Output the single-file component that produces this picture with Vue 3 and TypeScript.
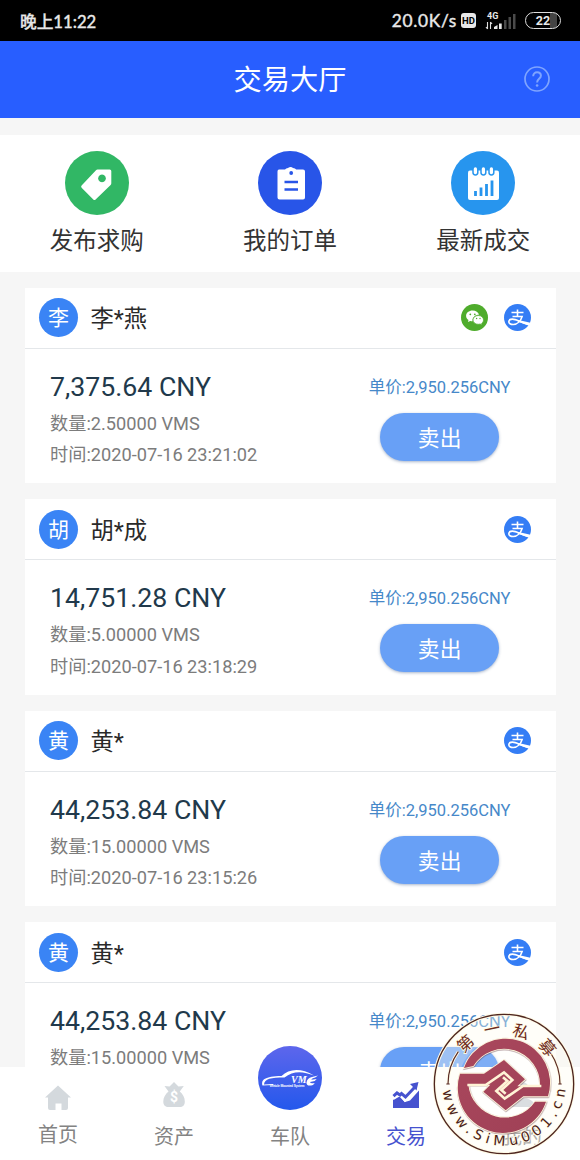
<script setup lang="ts">
import { ref } from 'vue'

interface Order {
  id: number
  name: string
  amount: string
  count: string
  time: string
  price: string
  wechat?: boolean
}

interface Tab {
  key: string
  label: string
}

const orders = ref<Order[]>([
  { id: 1, name: '李*燕', amount: '7,375.64', count: '2.50000', time: '2020-07-16 23:21:02', price: '2,950.256', wechat: true },
  { id: 2, name: '胡*成', amount: '14,751.28', count: '5.00000', time: '2020-07-16 23:18:29', price: '2,950.256' },
  { id: 3, name: '黄*', amount: '44,253.84', count: '15.00000', time: '2020-07-16 23:15:26', price: '2,950.256' },
  { id: 4, name: '黄*', amount: '44,253.84', count: '15.00000', time: '', price: '2,950.256' }
])

const actions = [
  { key: 'buy', label: '发布求购' },
  { key: 'order', label: '我的订单' },
  { key: 'deal', label: '最新成交' }
]

const tabs: Tab[] = [
  { key: 'home', label: '首页' },
  { key: 'asset', label: '资产' },
  { key: 'team', label: '车队' },
  { key: 'trade', label: '交易' },
  { key: 'mine', label: '我的' }
]

const activeTab = ref('trade')
</script>

<template>
  <div class="page">
    <!-- 状态栏 -->
    <div class="status-bar">
      <span class="status-time">晚上11:22</span>
      <div class="status-right">
        <span class="status-speed">20.0K/s</span>
        <span class="status-hd">HD</span>
        <svg class="status-signal" viewBox="0 0 32 20">
          <text x="2" y="7.5" class="signal-text">4G</text>
          <path d="M2.5 11v7M5.5 18v-7M1 16l1.5 2M7 13l-1.5-2" fill="none" stroke="#ddd" stroke-width="1.1" />
          <path d="M9 18v-2l3.5-2v4zM14 12.5h2.7V18H14z" fill="#e8e8e8" />
          <path d="M19 9h2.5v9H19zM23.5 6H26v12h-2.5zM28 3h2.5v15H28z" fill="#4a4a4a" />
        </svg>
        <div class="battery">22</div>
      </div>
    </div>

    <div class="nav-bar">
      <span class="nav-title">交易大厅</span>
      <svg class="nav-help" viewBox="0 0 26 26" fill="none" stroke="#7fa4ff" stroke-width="1.7">
        <circle cx="13" cy="13" r="12" />
        <path d="M9.2 10.2c0-2.4 1.6-3.9 3.9-3.9s3.8 1.4 3.8 3.5c0 3-3.8 3.2-3.8 6.600" stroke-width="2" />
        <circle cx="13.1" cy="19.5" r="1.3" fill="#7fa4ff" stroke="none" />
      </svg>
    </div>

    <!-- 快捷入口 -->
    <div class="actions">
      <div v-for="item in actions" :key="item.key" class="action-item">
        <div :class="['action-icon', item.key]">
          <svg v-if="item.key === 'buy'" viewBox="0 0 64 64">
            <path
              fill="#fff"
              fill-rule="evenodd"
              d="M32.5 18.5h12.2q1.6 0 1.6 1.6v12.2q0 1-.7 1.7L30.6 48.5q-1.2 1-2.3 0L16.6 36.800q-1-1.200 0-2.300L31 19.200q.6-.7 1.500-.7zM37 23.500a3.900 3.900 0 1 0 .01 0z"
            />
          </svg>
          <svg v-else-if="item.key === 'order'" viewBox="0 0 64 64">
            <path d="M21 18.500h6q1-1.600 3-1.600 2.800-2 5 0 2.300 0 3.200 1.600H45q2 0 2 2v26q0 2-2 2H21.500q-2 0-2-2v-26q0-2 1.500-2z" fill="#fff" />
            <circle cx="33.2" cy="22" r="1.9" fill="#2855e8" />
            <path d="M26.500 31h13.500M26.500 38.500h13.500" stroke="#2855e8" stroke-width="2.4" />
          </svg>
          <svg v-else viewBox="0 0 64 64">
            <rect x="17" y="19.5" width="31" height="29.5" rx="2" fill="#fff" />
            <g fill="#fff" stroke="#2795ee" stroke-width="1.5">
              <rect x="22" y="15.5" width="4.8" height="8.5" rx="2.4" />
              <rect x="30" y="15.5" width="4.8" height="8.5" rx="2.4" />
              <rect x="38" y="15.5" width="4.8" height="8.5" rx="2.4" />
            </g>
            <path d="M24.500 45v-5M30 45v-8.500M35.500 45V33M41 45V29.500" stroke="#2795ee" stroke-width="2.8" />
          </svg>
        </div>
        <span class="action-label">{{ item.label }}</span>
      </div>
    </div>

    <!-- 订单列表 -->
    <div class="order-list">
      <div v-for="order in orders" :key="order.id" class="order-card">
        <div class="card-header">
          <span class="avatar">{{ order.name[0] }}</span>
          <span class="user-name">{{ order.name }}</span>
          <div class="pay-types">
            <svg v-if="order.wechat" class="pay-icon" viewBox="0 0 27 27">
              <circle cx="13.5" cy="13.5" r="13.5" fill="#4fac2c" />
              <path d="M11.600 6.500c-3.700 0-6.500 2.400-6.500 5.400 0 1.700.9 3.200 2.400 4.200l-.6 2 2.300-1.200c.8.200 1.600.3 2.400.3z M11.600 6.500c3.200 0 5.800 1.800 6.400 4.300-3.700 0-6.700 2.500-6.400 6.400z" fill="#fff" />
              <path d="M17.300 11.500c3 0 5.200 2 5.200 4.400 0 1.400-.7 2.600-1.800 3.400l.4 1.700-1.900-1c-.6.200-1.200.3-1.900.3-3 0-5.300-2-5.300-4.400s2.300-4.400 5.300-4.400z" fill="#fff" stroke="#4fac2c" stroke-width=".7" />
              <g fill="#4fac2c">
                <circle cx="9.3" cy="10.3" r=".9" />
                <circle cx="13.8" cy="10.3" r=".9" />
                <circle cx="15.6" cy="14.5" r=".7" />
                <circle cx="19" cy="14.5" r=".7" />
              </g>
            </svg>
            <svg class="pay-icon" viewBox="0 0 27 27">
              <circle cx="13.5" cy="13.5" r="13.5" fill="#347df5" />
              <path d="M7.500 8.500h12M13.500 5.500v6.500M8.500 12.500h9.600c-1.200 4-4.500 8-8.900 8-2.700 0-4.400-1.100-4.400-2.800 0-1.500 1.500-2.600 3.600-2.600 4.100 0 8.300 3.300 16.500 5.300" fill="none" stroke="#fff" stroke-width="1.6" />
              <path d="M14.500 16l11.900 2.700-1.400 3-11.500-4.200z" fill="#fff" />
            </svg>
          </div>
        </div>
        <div class="card-body">
          <div class="card-info">
            <div class="amount">{{ order.amount }} CNY</div>
            <div class="detail">数量:{{ order.count }} VMS</div>
            <div v-if="order.time" class="detail">时间:{{ order.time }}</div>
          </div>
          <div class="card-side">
            <span class="price">单价:{{ order.price }}CNY</span>
            <button class="sell-btn">卖出</button>
          </div>
        </div>
      </div>
    </div>

    <!-- 底部导航 -->
    <div class="tab-bar">
      <div
        v-for="tab in tabs"
        :key="tab.key"
        :class="['tab-item', tab.key, { active: activeTab === tab.key }]"
        @click="activeTab = tab.key"
      >
        <div v-if="tab.key === 'team'" class="team-logo">
          <svg viewBox="0 0 64 64">
            <path d="M4.500 39.500c-1.500-6 2-9 19-9.500C31 22.500 43 21.500 56 29.500 45 25 35 24.500 26.500 31.500 13 31.500 6.500 32.500 6 38.500l9-.5v1z" fill="#fff" />
            <text x="33" y="37" class="logo-vm">VM</text>
            <path d="M60 29.500l-6 1.500q-5 1-5.500 5.500-.2 4.500 6.500 2.500l1.800-2q-5 1-4.600-1l4.500-1 2-2q-4 .8-5.500.8 1-1.800 4-2.300z" fill="#fff" />
            <text x="11.5" y="40.5" class="logo-sub" textLength="35">Vehicle Mounted System</text>
          </svg>
        </div>
        <svg v-else class="tab-icon" viewBox="0 0 26 26">
          <path v-if="tab.key === 'home'" d="M13 .5L26 12.500h-3V23q0 2-2 2h-4.500v-6.500h-6V25H5q-2 0-2-2V12.500H0z" fill="currentColor" />
          <template v-else-if="tab.key === 'asset'">
            <path d="M3.500 4l5 .5L13 0l4.500 4.500 5.300-.5-4 5.500c3 2.500 5 6 5 10 0 4-2 5.500-5 5.500H7.500c-3 0-5.200-1.500-5.200-5.500 0-4 2.200-7.500 5.200-10z" fill="currentColor" />
            <text x="9" y="19.5" class="bag-sign">$</text>
          </template>
          <g v-else-if="tab.key === 'trade'">
            <path d="M0 13l7 2 5 5 5-1.500 9-10V26H0z" fill="currentColor" />
            <path d="M-1 15.500l8.500-5 4.500 5.300 9.500-9.500" fill="none" stroke="#fff" stroke-width="6" />
            <path d="M.5 14.200l3.500-3.200 3 2 1.500-1.500 4 3.500 9-9.500" fill="none" stroke="currentColor" stroke-width="3" />
            <path d="M17 2l8.500-2-2 8.500z" fill="currentColor" />
          </g>
          <g v-else fill="currentColor">
            <circle cx="13" cy="7" r="7" />
            <path d="M0 25c0-12 26-12 26 0z" />
          </g>
        </svg>
        <span class="tab-label">{{ tab.label }}</span>
      </div>
    </div>

    <!-- 印章水印 -->
    <svg class="seal" viewBox="37 25 426 426">
      <defs>
        <path id="seal-url" d="M65 238a185 185 0 0 0 370 0" />
        <linearGradient id="seal-red" x1="0" y1="0" x2="1" y2="1">
          <stop offset="0" stop-color="#aa485d" />
          <stop offset="1" stop-color="#9f4056" />
        </linearGradient>
      </defs>
      <circle cx="250" cy="238" r="210" fill="#fffef2" fill-opacity=".15" />
      <circle cx="250" cy="238" r="172" fill="none" stroke="#fffdf0" stroke-width="70" stroke-opacity=".25" />
      <circle cx="250" cy="238" r="209" fill="none" stroke="#fffbe7" stroke-width="10" />
      <circle cx="250" cy="238" r="209" fill="none" stroke="#4f2620" stroke-width="4" />
      <path d="M82 238A168 168 0 0 1 113 141M390 145A168 168 0 0 1 418 238" class="seal-arc-glow" />
      <path d="M82 238A168 168 0 0 1 113 141M390 145A168 168 0 0 1 418 238M77 238h10M413 238h10" class="seal-arc" />
      <path
        class="seal-mark-shape"
        d="M130 190A133 133 0 0 1 382 275H308L255 317 188 261 209 240H143A110 110 0 0 0 343 291H376A133 133 0 0 1 118 207H190L250 166 313 224 290 245H358A108 108 0 0 0 158 184z"
      />
      <g class="seal-lines">
        <path d="M140 241h55l55-38 25 23-33 30 13 11" />
        <path d="M362 244h-55l-55 38-25-23 33-30-13-11" />
      </g>
      <g class="seal-name">
        <text transform="translate(135 117) rotate(-43)" y="17">第</text>
        <text transform="translate(214 74) rotate(-12)" y="17">一</text>
        <text transform="translate(301 82) rotate(18)" y="17">私</text>
        <text transform="translate(379 129) rotate(50)" y="17">募</text>
      </g>
      <text class="seal-url">
        <textPath href="#seal-url" startOffset="20" textLength="545">www.SiMu001.cn</textPath>
      </text>
    </svg>
  </div>
</template>

<style>
body {
  margin: 0;
  background: #f6f6f6;
}
</style>

<style scoped>
.page {
  position: relative;
  display: flex;
  flex-direction: column;
  width: 580px;
  height: 1160px;
  overflow: hidden;
  background: #f6f6f6;
  font-family: Roboto, 'Noto Sans CJK SC', sans-serif;
}

.status-bar {
  display: flex;
  align-items: center;
  justify-content: space-between;
  height: 41px;
  flex-shrink: 0;
  box-sizing: border-box;
  padding: 0 19px 0 20px;
  background: #000;
  color: #e8e8e8;
  font-family: Lato, 'Noto Sans CJK SC', sans-serif;
}

.status-time {
  font-size: 16.7px;
  font-weight: 500;
  -webkit-text-stroke: 0.3px #e8e8e8;
}

.status-right {
  display: flex;
  align-items: center;
}

.status-speed {
  font-size: 17.3px;
  letter-spacing: 0.7px;
  -webkit-text-stroke: 0.4px #e8e8e8;
}

.status-hd {
  width: 15px;
  height: 15px;
  margin-left: 4px;
  border-radius: 3px;
  background: #e8e8e8;
  color: #000;
  font: bold 9.5px/15px Roboto, sans-serif;
  text-align: center;
}

.status-signal {
  width: 32px;
  height: 20px;
  margin: 0 8px 0 9px;
  overflow: visible;
}

.signal-text {
  fill: #e8e8e8;
  font: bold 9px Roboto, sans-serif;
}

.battery {
  width: 36px;
  height: 17px;
  box-sizing: border-box;
  border: 1.5px solid #ddd;
  border-radius: 9px;
  background: linear-gradient(90deg, #000 72%, #444 72%, #444 90%, #000 90%);
  font: bold 12.5px/15px Roboto, sans-serif;
  text-align: center;
}

.nav-bar {
  display: grid;
  grid-template-columns: 1fr auto 1fr;
  align-items: center;
  height: 77px;
  flex-shrink: 0;
  background: #285eff;
  color: #fff;
}

.nav-title {
  grid-column: 2;
  padding-top: 2px;
  font-size: 28.2px;
  line-height: 40px;
}

.nav-help {
  width: 26px;
  height: 26px;
  margin: 0 30px 2px 0;
  justify-self: end;
}

.actions {
  display: flex;
  flex-shrink: 0;
  height: 137px;
  margin-top: 16.5px;
  background: #fff;
}

.action-item {
  display: flex;
  flex: 1;
  flex-direction: column;
  align-items: center;
  padding-top: 16.5px;
}

.action-icon {
  width: 64px;
  height: 64px;
  border-radius: 50%;
}

.action-icon.buy {
  background: #31b765;
}

.action-icon.order {
  background: #2855e8;
}

.action-icon.deal {
  background: #2795ee;
}

.action-icon svg {
  display: block;
}

.action-label {
  margin-top: 9px;
  color: #333;
  font-size: 23.5px;
  line-height: 35px;
}

.order-list {
  display: flex;
  flex: 1;
  flex-direction: column;
  gap: 16px;
  min-height: 0;
  overflow: hidden;
  padding: 16px 24px 0 25px;
}

.order-card {
  flex-shrink: 0;
  height: 195.6px;
  background: #fff;
}

.card-header {
  display: flex;
  align-items: center;
  height: 61px;
  box-sizing: border-box;
  padding: 0 25.5px 0 14px;
  border-bottom: 1px solid #e4e7ea;
}

.avatar {
  width: 39px;
  height: 39px;
  border-radius: 50%;
  background: #3a84f5;
  color: #fff;
  font-size: 21px;
  line-height: 40px;
  text-align: center;
}

.user-name {
  margin-left: 12.5px;
  padding-bottom: 1px;
  color: #2a2a2a;
  font-size: 23.3px;
}

.pay-types {
  display: flex;
  gap: 16px;
  margin-left: auto;
}

.pay-icon {
  width: 27px;
  height: 27px;
}

.card-body {
  display: flex;
  justify-content: space-between;
  padding: 20px 45.5px 0 25px;
}

.amount {
  margin-bottom: 2px;
  color: #21394b;
  font-size: 26.7px;
  line-height: 37px;
}

.detail {
  color: #7c7c7c;
  font-size: 18.2px;
  line-height: 31.7px;
}

.card-side {
  display: flex;
  flex-direction: column;
  align-items: center;
}

.price {
  color: #4688c9;
  font-size: 16.5px;
  line-height: 38px;
}

.sell-btn {
  width: 119px;
  height: 48px;
  margin-top: 6px;
  padding: 0 0 1px;
  border: none;
  border-radius: 24px;
  background: #68a0f6;
  box-shadow: 0 1px 3px rgba(60, 90, 140, 0.45);
  color: #fff;
  font-family: inherit;
  font-size: 21.8px;
}

.tab-bar {
  display: flex;
  height: 93px;
  flex-shrink: 0;
  background: #fff;
}

.tab-item {
  display: flex;
  flex: 1;
  flex-direction: column;
  align-items: center;
  color: #d4d9dd;
}

.tab-icon {
  width: 26px;
  height: 26px;
  margin-top: 15px;
  overflow: visible;
}

.tab-item.home .tab-icon {
  margin-top: 18px;
}

.tab-label {
  margin-top: 14px;
  color: #838383;
  font-size: 20px;
  line-height: 30px;
}

.tab-item.home .tab-label {
  margin-top: 9px;
}

.tab-item.active,
.tab-item.active .tab-label {
  color: #4652cf;
}

.team-logo {
  width: 64px;
  height: 64px;
  margin-top: -21px;
  border-radius: 50%;
  background: linear-gradient(#5d66ec, #2458ec);
}

.team-logo + .tab-label {
  margin-top: 12px;
}

.logo-vm {
  fill: #fff;
  font: italic bold 10px 'Liberation Serif', serif;
}

.logo-sub {
  fill: #fff;
  font: bold 3.3px 'Liberation Sans', sans-serif;
}

.bag-sign {
  fill: #fff;
  font: bold 14px Roboto, sans-serif;
}

.seal {
  position: absolute;
  left: 432.5px;
  top: 1013.3px;
  width: 142px;
  height: 142px;
}

.seal-arc-glow {
  fill: none;
  stroke: #fffbe7;
  stroke-width: 9px;
}

.seal-arc {
  fill: none;
  stroke: #5a2a22;
  stroke-width: 3.5px;
}

.seal-mark-shape {
  fill: url(#seal-red);
  stroke: #fff6dc;
  stroke-width: 5px;
  paint-order: stroke;
  filter: drop-shadow(1px 2px 2px rgba(80, 30, 40, 0.5));
}

.seal-lines {
  fill: none;
  stroke: #fff3d6;
  stroke-width: 8px;
}

.seal-name {
  fill: #6d2a20;
  font-family: 'Noto Sans CJK SC', sans-serif;
  font-size: 49px;
  text-anchor: middle;
}

.seal-name,
.seal-url {
  stroke: #fffbe7;
  stroke-width: 5px;
  paint-order: stroke;
}

.seal-url {
  fill: #4c2118;
  font-family: 'DejaVu Sans', 'Noto Sans', sans-serif;
  font-size: 42px;
}
</style>
